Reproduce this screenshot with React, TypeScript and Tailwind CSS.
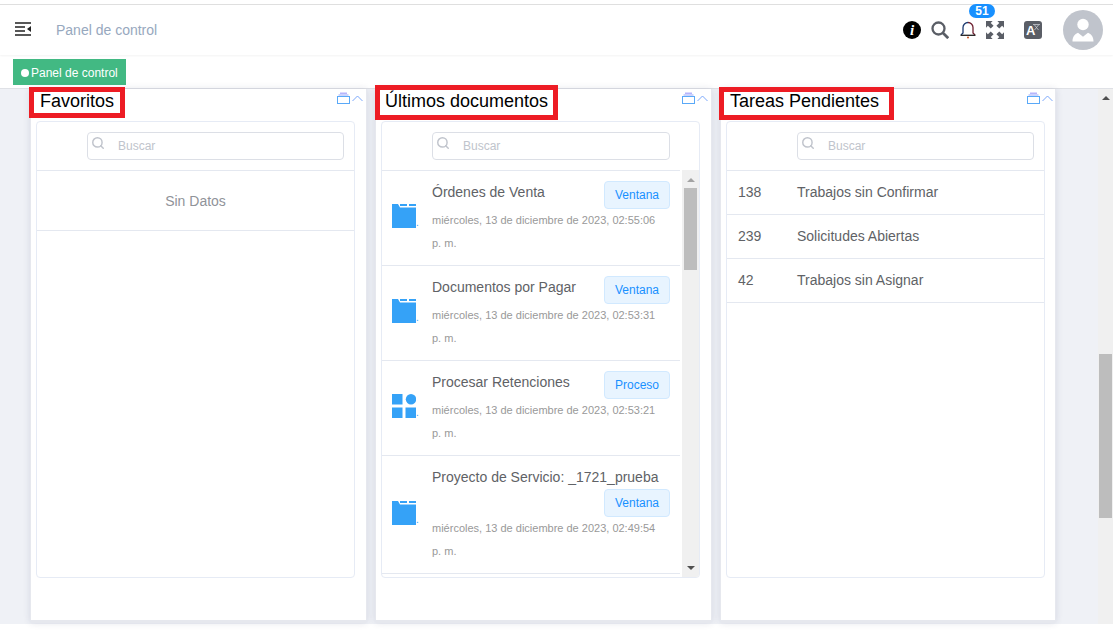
import { Search } from "lucide-react";

const font = "font-['Liberation_Sans',Arial,sans-serif]";

const FolderIcon = () => (
  <svg width="24" height="24" viewBox="0 0 24 24" className="block">
    <path d="M0 0h6l2 3.500h16V24H0z" fill="#35a2f7" />
    <path d="M8 0h7v2H8zM17 0h7v2h-7z" fill="#35a2f7" />
  </svg>
);

const ProcessIcon = () => (
  <svg width="24" height="24" viewBox="0 0 24 24" className="block">
    <rect x="0" y="0" width="10.500" height="10.500" fill="#35a2f7" />
    <circle cx="19" cy="5.200" r="5.200" fill="#35a2f7" />
    <rect x="0" y="13.500" width="10.500" height="10.500" fill="#35a2f7" />
    <rect x="13.500" y="13.500" width="10.500" height="10.500" fill="#35a2f7" />
  </svg>
);

const CardTools = ({ shift }: { shift: string }) => (
  <div className={`flex items-center mt-[3px] gap-[2px] ${shift}`}>
    <svg width="13" height="12" viewBox="0 0 13 12">
      <rect x="3" y="0.500" width="7" height="1.500" fill="#b7b4fb" />
      <rect x="1.500" y="2.500" width="10" height="1" fill="#9aa8fb" />
      <rect x="0.500" y="4.500" width="12" height="7" fill="none" stroke="#5aa9f8" strokeWidth="1" />
    </svg>
    <svg width="11" height="7" viewBox="0 0 11 7">
      <path d="M0.500 6 5.500 1l5 5" fill="none" stroke="#7aa7fb" strokeWidth="1" />
    </svg>
  </div>
);

const CardHead = ({ title, box, shift = "-mr-[2px]" }: { title: string; box: string; shift?: string }) => (
  <div className="flex justify-between items-start h-[32px]">
    <div className={`${box} border-[5px] border-[#ed1c24] bg-white text-[18px] text-black whitespace-nowrap`}>
      {title}
    </div>
    <CardTools shift={shift} />
  </div>
);

const SearchBar = ({ left, right = "pr-[10px]", line = "" }: { left: string; right?: string; line?: string }) => (
  <>
    <div className={`h-[48px] shrink-0 pt-[10px] ${left} ${right}`}>
      <div className="relative h-[28px] rounded-[4px] border border-[#dcdfe6] pl-[30px] text-[12px] leading-[26px] text-[#c0c4cc]">
        <Search size={14} strokeWidth={2.5} className="absolute left-[3px] top-[3px] text-[#c0c4cc]" />
        Buscar
      </div>
    </div>
    <div className={`h-px shrink-0 bg-[#e4e8f0] ${line}`} />
  </>
);

const docs = [
  { t: "Órdenes de Venta", tag: "Ventana", d: "miércoles, 13 de diciembre de 2023, 02:55:06", icon: "f" },
  { t: "Documentos por Pagar", tag: "Ventana", d: "miércoles, 13 de diciembre de 2023, 02:53:31", icon: "f" },
  { t: "Procesar Retenciones", tag: "Proceso", d: "miércoles, 13 de diciembre de 2023, 02:53:21", icon: "p" },
  { t: "Proyecto de Servicio: _1721_prueba", tag: "Ventana", d: "miércoles, 13 de diciembre de 2023, 02:49:54", icon: "f", wrap: true },
];

const Tag = ({ label }: { label: string }) => (
  <span className="inline-block w-[66px] h-[28px] rounded-[4px] border border-[#d1e9ff] bg-[#e8f4ff] text-center text-[12px] leading-[26px] text-[#1890ff]">
    {label}
  </span>
);

const DocRow = ({ doc }: { doc: (typeof docs)[number] }) => (
  <div className={`flex items-center border-b border-[#e4e8f0] px-[10px] ${doc.wrap ? "h-[118px]" : "h-[95px]"}`}>
    <div className="w-[40px] shrink-0 flex items-end -mt-[4px]">
      {doc.icon === "f" ? <FolderIcon /> : <ProcessIcon />}
      <span className="text-[#35a2f7] text-[10px] leading-[10px]">.</span>
    </div>
    <div className={`flex-1 min-w-0 self-start ${doc.wrap ? "pt-[11px]" : "pt-[10px]"}`}>
      {doc.wrap ? (
        <div className="flex flex-col">
          <div className="text-[14px] leading-[20px] text-[#606266] whitespace-nowrap">{doc.t}</div>
          <div className="flex justify-end mt-[2px]"><Tag label={doc.tag} /></div>
        </div>
      ) : (
        <div className="flex justify-between items-start">
          <div className="text-[14px] leading-[20px] text-[#606266] whitespace-nowrap mt-[1px]">{doc.t}</div>
          <Tag label={doc.tag} />
        </div>
      )}
      <div className="text-[11px] leading-[23px] text-[#999999]">
        {doc.d}
        <br />
        p. m.
      </div>
    </div>
  </div>
);

const tasks = [
  { n: "138", t: "Trabajos sin Confirmar" },
  { n: "239", t: "Solicitudes Abiertas" },
  { n: "42", t: "Trabajos sin Asignar" },
];

const shell = "bg-white rounded-b-[3px] border-x border-b-[3px] border-[#e6e8ee] h-[534px] flex flex-col px-[5px] shadow-[0_0_7px_rgba(40,50,90,0.13)]";
const inner = "w-[319px] h-[457px] rounded-[4px] border border-[#e6ebf5] flex flex-col overflow-hidden";

export default function App() {
  return (
    <div className={`${font} w-[1113px] h-[642px] overflow-hidden bg-white flex flex-col`}>
      <header className="mt-[4px] h-[51px] shrink-0 border-t border-[#dfdfdf] shadow-[0_1px_2px_rgba(0,0,0,0.05)] flex items-center">
        <svg width="16" height="14" viewBox="0 0 16 14" className="ml-[15px] -mt-[2px]">
          <path d="M0 1h16M0 5h10M0 9h10M0 13h16" stroke="#222" strokeWidth="1.600" />
          <path d="M16 4v6l-4-3z" fill="#222" />
        </svg>
        <span className="ml-[25px] text-[14px] text-[#97a8be]">Panel de control</span>
        <div className="ml-auto flex items-center h-full relative">
          <span className="w-[18px] h-[18px] rounded-full bg-black text-white flex items-center justify-center font-['Liberation_Serif',serif] italic font-bold text-[15px] leading-none">i</span>
          <svg width="18" height="18" viewBox="0 0 18 18" className="ml-[10px]" fill="none" stroke="#5a5e66">
            <circle cx="7.500" cy="7.500" r="6" strokeWidth="2.300" />
            <path d="M12 12l5.200 5.200" strokeWidth="2.700" />
          </svg>
          <svg width="16" height="18" viewBox="0 0 16 18" className="ml-[11px]" fill="none" strokeWidth="1.300">
            <path d="M8 1.500A5 5 0 0 0 3 6.500V12l-2 2" stroke="#1d3a70" />
            <path d="M8 1.500a5 5 0 0 1 5 5V12l2 2" stroke="#6e2030" />
            <path d="M0.500 14.300h15" stroke="#222" />
            <circle cx="8" cy="16.500" r="1" fill="#c8501e" stroke="none" />
          </svg>
          <span className="absolute left-[66px] top-[-1px] h-[14px] w-[26px] rounded-full bg-[#1890ff] text-white text-[12px] font-bold text-center leading-[14px]">51</span>
          <svg width="18" height="18" viewBox="0 0 19 19" className="ml-[10px]" fill="#5a5e66">
            <path d="M0 0h7L5 2l3 3-3 3-3-3-2 2zM19 0v7l-2-2-3 3-3-3 3-3-2-2zM0 19v-7l2 2 3-3 3 3-3 3 2 2zM19 19h-7l2-2-3-3 3-3 3 3 2-2z" />
          </svg>
          <span className="relative ml-[20px] w-[18px] h-[18px] rounded-[3px] bg-[#5a5e66] text-white text-[13px] font-bold leading-[20px] pl-[2px]">
            A
            <svg width="8" height="6" viewBox="0 0 8 6" className="absolute right-[1px] top-[3px]">
              <path d="M0 .5h7M1.500 1l4 5M5.500 1l-4 5" stroke="#c9ccd2" strokeWidth=".8" fill="none" />
            </svg>
          </span>
          <svg width="40" height="40" viewBox="0 0 40 40" className="ml-[21px] mr-[10px]">
            <circle cx="20" cy="20" r="20" fill="#c0c4cc" />
            <circle cx="20" cy="14.500" r="5.700" fill="#fff" />
            <path d="M9.500 31.500c0-4 1.500-7 5.500-8.700l5 4 5-4c4 1.700 5.500 4.700 5.500 8.700z" fill="#fff" />
          </svg>
        </div>
      </header>

      <div className="h-[33px] shrink-0 pl-[13px] pt-[4px]">
        <div className="w-[113px] h-[26px] bg-[#42b983] text-white text-[12px] flex items-center pl-[8px] pt-px">
          <span className="w-[8px] h-[8px] rounded-full bg-white mr-[2px]" />
          Panel de control
        </div>
      </div>

      <main className="h-[536px] shrink-0 border-t border-[#dfe1e6] bg-[#eff1f6] flex">
        <div className="flex-1 flex gap-[8px] pl-[30px] items-start">
          <section className={`${shell} w-[337px]`}>
            <CardHead title="Favoritos" box="w-[96px] h-[31px] -ml-[7px] -mt-[2px] pl-[6px] leading-[19px]" />
            <div className={inner}>
              <SearchBar left="pl-[50px]" />
              <div className="h-[60px] pt-[2px] border-b border-[#e4e8f0] flex items-center justify-center text-[14px] text-[#909399]">Sin Datos</div>
            </div>
          </section>

          <section className={`${shell} w-[337px]`}>
            <CardHead title="Últimos documentos" box="w-[183px] h-[35px] -ml-[6px] -mt-[4px] pl-[5px] leading-[23px]" />
            <div className={inner}>
              <SearchBar left="pl-[50px]" right="pr-[29px]" line="mr-[19px]" />
              <div className="flex-1 flex min-h-0 -mt-px">
                <div className="flex-1 min-w-0 overflow-hidden mr-[2px] pt-px">
                  {docs.map((doc) => (
                    <DocRow key={doc.t} doc={doc} />
                  ))}
                </div>
                <div className="relative w-[17px] shrink-0 bg-[#f0f0f0]">
                  <div className="absolute left-[2px] top-[18px] w-[13px] h-[82px] bg-[#bdbdbd]" />
                  <span className="absolute left-[5px] top-[8px] border-x-[4px] border-b-[4px] border-x-transparent border-b-[#a3a3a3]" />
                  <span className="absolute left-[5px] bottom-[7px] border-x-[4px] border-t-[4px] border-x-transparent border-t-[#505050]" />
                </div>
              </div>
            </div>
          </section>

          <section className={`${shell} w-[336px]`}>
            <CardHead title="Tareas Pendientes" shift="-mr-[3px]" box="w-[175px] h-[33px] -ml-[7px] -mt-[2px] pl-[6px] leading-[19px]" />
            <div className={inner}>
              <SearchBar left="pl-[70px]" />
              {tasks.map((task) => (
                <div key={task.n} className="h-[44px] shrink-0 border-b border-[#e4e8f0] flex items-center text-[14px] text-[#606266]">
                  <span className="w-[70px] pl-[11px] shrink-0">{task.n}</span>
                  <span>{task.t}</span>
                </div>
              ))}
            </div>
          </section>
        </div>

        <div className="relative w-[15px] shrink-0 bg-[#f0f0f0]">
          <span className="absolute left-[4px] top-[7px] border-x-[4px] border-b-[4px] border-x-transparent border-b-[#505050]" />
          <div className="absolute left-px top-[265px] w-[13px] h-[164px] bg-[#bdbdbd]" />
        </div>
      </main>
    </div>
  );
}
